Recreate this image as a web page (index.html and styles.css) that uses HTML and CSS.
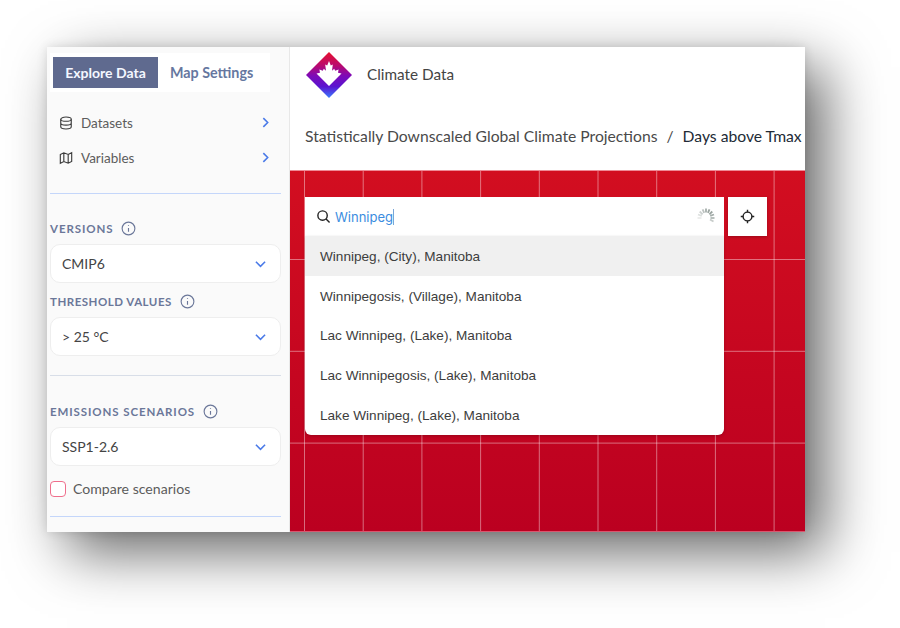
FILE: index.html
```html
<!DOCTYPE html>
<html lang="en">
<head>
    <meta charset="UTF-8">
    <meta name="viewport" content="width=device-width, initial-scale=1.0">
    <title>Climate Data</title>
    <link rel="stylesheet" href="styles.css">
</head>
<body>
    <div class="frame">
        <aside class="sidebar">
            <div class="tabs">
                <button class="tab active">Explore Data</button>
                <button class="tab">Map Settings</button>
            </div>

            <div class="nav-row first">
                <svg class="nav-icon" viewBox="0 0 16 16"><ellipse cx="8" cy="3.6" rx="6" ry="2.4"/><path d="M2 3.6v8.8c0 1.3 2.7 2.4 6 2.4s6-1.1 6-2.4V3.6M2 8c0 1.3 2.7 2.4 6 2.4s6-1.1 6-2.4"/></svg>
                <span>Datasets</span>
                <svg class="chevron-right" viewBox="0 0 8 12"><path d="M1.5 1l5 5-5 5"/></svg>
            </div>
            <div class="nav-row">
                <svg class="nav-icon" viewBox="0 0 16 16"><path d="M1.5 4l4-2 5 2 4-2v10l-4 2-5-2-4 2zM5.5 2v10M10.500 4v10"/></svg>
                <span>Variables</span>
                <svg class="chevron-right" viewBox="0 0 8 12"><path d="M1.5 1l5 5-5 5"/></svg>
            </div>

            <hr class="divider nav-end">

            <div class="field-label versions">VERSIONS
                <svg class="info" viewBox="0 0 16 16"><circle cx="8" cy="8" r="6.8"/><path d="M8 7.400v4M8 4.400v1"/></svg>
            </div>
            <div class="select">CMIP6
                <svg class="chevron-down" viewBox="0 0 12 8"><path d="M1 1.500l5 5 5-5"/></svg>
            </div>

            <div class="field-label threshold">THRESHOLD VALUES
                <svg class="info" viewBox="0 0 16 16"><circle cx="8" cy="8" r="6.8"/><path d="M8 7.400v4M8 4.400v1"/></svg>
            </div>
            <div class="select">&gt; 25 °C
                <svg class="chevron-down" viewBox="0 0 12 8"><path d="M1 1.500l5 5 5-5"/></svg>
            </div>

            <hr class="divider threshold-end">

            <div class="field-label emissions">EMISSIONS SCENARIOS
                <svg class="info" viewBox="0 0 16 16"><circle cx="8" cy="8" r="6.8"/><path d="M8 7.400v4M8 4.400v1"/></svg>
            </div>
            <div class="select">SSP1-2.6
                <svg class="chevron-down" viewBox="0 0 12 8"><path d="M1 1.500l5 5 5-5"/></svg>
            </div>

            <label class="compare">
                <span class="checkbox"></span>
                Compare scenarios
            </label>

            <hr class="divider compare-end">
        </aside>

        <main class="main">
            <header class="header">
                <div class="brand">
                    <svg class="logo" viewBox="0 0 46 46">
                        <defs>
                            <linearGradient id="logoFill" x1="0" y1="0" x2="0" y2="1">
                                <stop offset="0" stop-color="#e8112d"/>
                                <stop offset="0.3" stop-color="#b80a70"/>
                                <stop offset="0.52" stop-color="#7d0ab8"/>
                                <stop offset="0.75" stop-color="#5a14d0"/>
                                <stop offset="1" stop-color="#3a7cff"/>
                            </linearGradient>
                        </defs>
                        <path fill="url(#logoFill)" d="M23 0l23 23-23 23L0 23z"/>
                        <path fill="#fff" d="M23 34L13 24l-2.500-2.500 3.500-.8-.6-3.200 3.400 1.300 1-2 2.200 2-.8-6.300 2 1L23 9l1.800 4.500 2-1-.8 6.300 2.200-2 1 2 3.400-1.300-.6 3.200 3.500.8-2.500 2.500z"/>
                    </svg>
                    <span class="brand-name">Climate Data</span>
                </div>
                <div class="breadcrumb">
                    <span>Statistically Downscaled Global Climate Projections</span>
                    <span class="slash">/</span>
                    <span class="current">Days above Tmax</span>
                </div>
            </header>

            <section class="map">
                <div class="search-col">
                    <div class="search-box">
                        <svg class="search-icon" viewBox="0 0 16 16"><circle cx="7" cy="7" r="5"/><path d="M10.700 10.700L14.500 14.500"/></svg>
                        <span class="query">Winnipeg</span>
                        <svg class="spinner" viewBox="0 0 20 20">
                            <path class="t1" d="M10 1.500v4"/>
                            <path class="t2" d="M13.500 2.300l-1.600 3.600"/>
                            <path class="t3" d="M16.300 4.500l-2.900 2.800"/>
                            <path class="t4" d="M18 7.500l-3.800 1.300"/>
                            <path class="t5" d="M18.500 11h-4"/>
                            <path class="t6" d="M17.500 14.500l-3.500-2"/>
                            <path class="t7" d="M6.600 2.300l1.600 3.600"/>
                            <path class="t8" d="M3.700 4.500l2.900 2.800"/>
                            <path class="t9" d="M2 7.500l3.800 1.300"/>
                            <path class="t10" d="M1.500 11h4"/>
                        </svg>
                    </div>
                    <ul class="results">
                        <li class="selected">Winnipeg, (City), Manitoba</li>
                        <li>Winnipegosis, (Village), Manitoba</li>
                        <li>Lac Winnipeg, (Lake), Manitoba</li>
                        <li>Lac Winnipegosis, (Lake), Manitoba</li>
                        <li>Lake Winnipeg, (Lake), Manitoba</li>
                    </ul>
                </div>
                <button class="locate">
                    <svg viewBox="0 0 16 16"><circle cx="8" cy="8" r="4.700"/><path d="M8 .8v2.600M8 12.600v2.600M.8 8h2.600M12.600 8h2.600"/></svg>
                </button>
            </section>
        </main>
    </div>
</body>
</html>
```

FILE: styles.css
```css
* {
    box-sizing: border-box;
}
body {
    margin: 0;
    height: 628px;
    overflow: hidden;
    background: white;
    font-family: Lato, sans-serif;
    padding: 47px 0 0 47px;
}
.frame {
    display: flex;
    width: 758px;
    height: 485px;
    box-shadow: 20px 20px 54px rgba(0, 0, 0, 0.6), 0 0 10px rgba(0, 0, 0, 0.12);
}

/* sidebar */
.sidebar {
    width: 243px;
    flex-shrink: 0;
    background: #fafafa;
    border-right: 1px solid #e8e8e8;
    padding: 6px 8px 0 3px;
    overflow: hidden;
}
.tabs {
    display: flex;
    width: 220px;
    height: 39px;
    background: white;
    padding: 4px 3px;
}
.tab {
    height: 31px;
    border: none;
    background: none;
    font-family: Lato, sans-serif;
    font-size: 14.300px;
    font-weight: 700;
    color: #66779f;
    padding: 0 12px;
    white-space: nowrap;
}
.tab.active {
    width: 105px;
    background: #5f6a8f;
    color: #f4f7ff;
    font-size: 14px;
}
.nav-row {
    display: flex;
    align-items: center;
    height: 35px;
    font-size: 13.500px;
    color: #5c5c5c;
    padding-left: 9px;
    width: 219px;
}
.nav-row.first {
    margin-top: 13px;
}
.nav-icon {
    width: 14px;
    height: 14px;
    margin-right: 8px;
    fill: none;
    stroke: #3c3c3c;
    stroke-width: 1.300;
}
.chevron-right {
    width: 7px;
    height: 11px;
    margin-left: auto;
    fill: none;
    stroke: #4a7ae8;
    stroke-width: 1.800;
}
.divider {
    border: none;
    height: 1px;
    background: #c4d6fa;
    margin: 0;
}
.nav-end {
    margin-top: 18px;
}
.threshold-end {
    margin-top: 19px;
    background: #d8dee8;
}
.compare-end {
    margin-top: 19px;
}
.field-label {
    display: flex;
    align-items: center;
    height: 16px;
    font-size: 11.500px;
    font-weight: 700;
    letter-spacing: 0.900px;
    color: #6b7799;
}
.versions {
    margin-top: 26px;
}
.threshold {
    margin-top: 10px;
    letter-spacing: 0.500px;
}
.emissions {
    margin-top: 27px;
}
.info {
    width: 15px;
    height: 15px;
    margin-left: 8px;
    fill: none;
    stroke: #6b7799;
    stroke-width: 1.200;
}
.select {
    display: flex;
    align-items: center;
    justify-content: space-between;
    height: 39px;
    margin-top: 8px;
    padding: 0 14px 0 11px;
    background: white;
    border: 1px solid #eeeeee;
    border-radius: 10px;
    font-size: 14px;
    color: #444;
}
.chevron-down {
    width: 11px;
    height: 8px;
    fill: none;
    stroke: #4a7ae8;
    stroke-width: 1.700;
}
.compare {
    display: flex;
    align-items: center;
    gap: 7px;
    margin-top: 14px;
    font-size: 14.100px;
    color: #5c5c5c;
}
.checkbox {
    width: 16px;
    height: 16px;
    border: 1.500px solid #ef6f8c;
    border-radius: 4px;
    background: white;
}

/* main column */
.main {
    flex: 1;
    display: flex;
    flex-direction: column;
    min-width: 0;
}
.header {
    height: 123px;
    background: white;
    padding: 5px 0 0 15px;
}
.brand {
    display: flex;
    align-items: center;
    height: 45px;
}
.logo {
    width: 46px;
    height: 46px;
    margin-left: 1px;
}
.brand-name {
    margin: 0 0 2px 15px;
    font-size: 15.300px;
    color: #444;
}
.breadcrumb {
    display: flex;
    align-items: center;
    margin-top: 30px;
    font-size: 15.700px;
    color: #4a4a4a;
    white-space: nowrap;
}
.slash {
    margin: 0 9px;
}
.current {
    color: #222b36;
}

/* map */
.map {
    flex: 1;
    display: flex;
    align-items: flex-start;
    gap: 4px;
    padding: 26px 0 0 15px;
    border-top: 1px solid #ee8a96;
    border-bottom: 1px solid #d9566e;
    background-color: #c60a22;
    background-image:
        repeating-linear-gradient(to right, transparent 0 13.500px, rgba(255, 255, 255, 0.42) 14.500px, transparent 15.500px 58.700px),
        repeating-linear-gradient(to bottom, transparent 0 87.500px, rgba(255, 255, 255, 0.42) 88.500px, transparent 89.500px 91.800px),
        linear-gradient(to bottom, #d20e20, #bb0020);
}
.search-col {
    width: 419px;
}
.search-box {
    display: flex;
    align-items: center;
    height: 39px;
    background: white;
    padding: 0 8px 0 11px;
}
.search-icon {
    width: 15px;
    height: 15px;
    fill: none;
    stroke: #222;
    stroke-width: 1.500;
}
.query {
    flex: 1;
    margin-left: 4px;
    padding-right: 1px;
    font-family: Inter, sans-serif;
    font-size: 13px;
    color: #3b8de0;
}
.query::after {
    content: "";
    display: inline-block;
    width: 1px;
    height: 16px;
    background: #7aa6d8;
    vertical-align: -3px;
}
.spinner {
    width: 20px;
    height: 20px;
    fill: none;
    stroke: #8f9a96;
    stroke-width: 1.800;
}
.spinner .t1 { opacity: 0.8; }
.spinner .t2 { opacity: 0.9; }
.spinner .t3 { opacity: 0.9; }
.spinner .t4 { opacity: 0.8; }
.spinner .t5 { opacity: 0.7; }
.spinner .t6 { opacity: 0.5; }
.spinner .t7 { opacity: 0.6; }
.spinner .t8 { opacity: 0.45; }
.spinner .t9 { opacity: 0.3; }
.spinner .t10 { opacity: 0.2; }
.results {
    list-style: none;
    margin: 0;
    padding: 0;
    background: white;
    border-radius: 0 0 6px 6px;
    overflow: hidden;
    box-shadow: 0 1px 3px rgba(0, 0, 0, 0.2);
    font-family: "Liberation Sans", Arial, sans-serif;
    font-size: 13.600px;
    color: #3d3d3d;
}
.results li {
    display: flex;
    align-items: center;
    height: 39.800px;
    padding: 1px 0 0 15px;
}
.results .selected {
    background: #f0f0f0;
}
.locate {
    display: flex;
    align-items: center;
    justify-content: center;
    width: 39px;
    height: 39px;
    border: none;
    padding: 0;
    background: white;
    box-shadow: 0 1px 3px rgba(0, 0, 0, 0.25);
}
.locate svg {
    width: 15px;
    height: 15px;
    fill: none;
    stroke: #222;
    stroke-width: 1.500;
}
```
